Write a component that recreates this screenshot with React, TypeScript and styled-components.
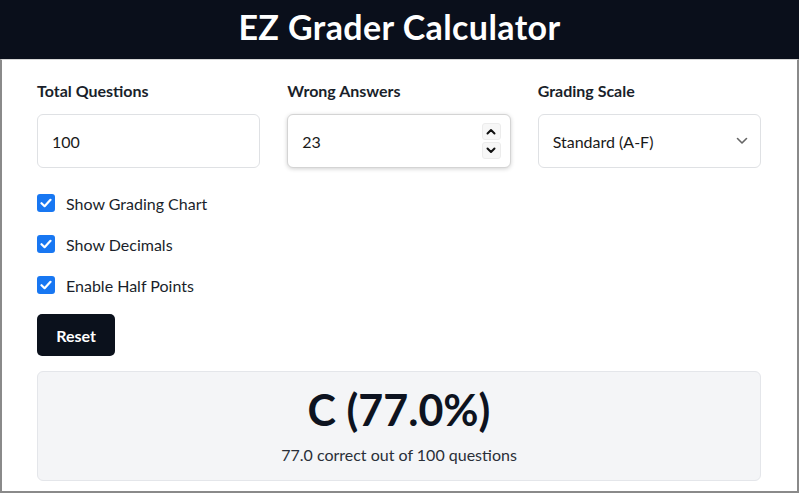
import styled, { createGlobalStyle } from "styled-components";

const GlobalStyle = createGlobalStyle`
  html, body {
    margin: 0;
    padding: 0;
    background: #ffffff;
    font-family: Lato, "Open Sans", Arial, sans-serif;
    color: #111827;
  }
  * { box-sizing: border-box; }
`;

const Page = styled.div`
  width: 799px;
  height: 493px;
  display: flex;
  flex-direction: column;
  overflow: hidden;
`;

const Header = styled.header`
  height: 59px;
  background: #0a0f1b;
  display: flex;
  align-items: center;
  justify-content: center;
  flex-shrink: 0;
  padding-bottom: 7px;
`;

const Title = styled.h1`
  margin: 0;
  color: #ffffff;
  font-size: 34px;
  font-weight: 700;
  letter-spacing: 0.4px;
`;

const Body = styled.main`
  flex: 1;
  border: 2px solid #8a8a8a;
  border-top: 1px solid #d7d7d7;
  padding: 21px 36px 0 35px;
  display: flex;
  flex-direction: column;
`;

const Fields = styled.div`
  display: grid;
  grid-template-columns: repeat(3, 1fr);
  column-gap: 27px;
`;

const Field = styled.div`
  display: flex;
  flex-direction: column;
  gap: 13px;
`;

const Label = styled.label`
  font-size: 16px;
  font-weight: 700;
  color: #1a1f2b;
  line-height: 20px;
`;

const InputBox = styled.div<{ $focused?: boolean }>`
  height: 54px;
  border: 1px solid ${(p) => (p.$focused ? "#d4d4d4" : "#dfe1e4")};
  border-radius: 6px;
  background: #fff;
  display: flex;
  align-items: center;
  padding: 0 9px 0 14px;
  font-size: 16px;
  color: #1a1a1a;
  box-shadow: ${(p) => (p.$focused ? "0 1px 4px rgba(0,0,0,0.18)" : "none")};
`;

const Value = styled.span`
  flex: 1;
`;

const Spinner = styled.div`
  display: flex;
  flex-direction: column;
  gap: 2px;
`;

const SpinBtn = styled.div`
  width: 19px;
  height: 17px;
  border-radius: 3px;
  background: #f7f7f7;
  border: 1px solid #ececec;
  display: flex;
  align-items: center;
  justify-content: center;
`;

const Chevron = styled.svg`
  flex-shrink: 0;
  margin-right: 3px;
`;

const Checks = styled.div`
  margin-top: 26px;
  display: flex;
  flex-direction: column;
  gap: 23px;
`;

const CheckRow = styled.label`
  display: flex;
  align-items: center;
  gap: 11px;
  font-size: 16px;
  color: #1a1f2b;
  height: 18px;
`;

const Box = styled.span`
  width: 18px;
  height: 18px;
  border-radius: 3px;
  background: #1877f2;
  display: flex;
  align-items: center;
  justify-content: center;
`;

const ResetButton = styled.button`
  margin-top: 20px;
  align-self: flex-start;
  width: 78px;
  height: 42px;
  border: none;
  border-radius: 5px;
  background: #0b111c;
  color: #fff;
  font-family: inherit;
  font-size: 16px;
  font-weight: 700;
`;

const Result = styled.section`
  margin-top: 15px;
  height: 110px;
  background: #f4f5f7;
  border: 1px solid #e4e6ea;
  border-radius: 6px;
  display: flex;
  flex-direction: column;
  align-items: center;
  padding-top: 13px;
`;

const Grade = styled.div`
  font-size: 43px;
  font-weight: 700;
  color: #0d1320;
  line-height: 50px;
`;

const Detail = styled.div`
  margin-top: 10px;
  font-size: 16px;
  color: #2a2f38;
`;

const Check = () => (
  <svg width="12" height="10" viewBox="0 0 12 10">
    <path d="M1.5 5.2 L4.6 8.2 L10.5 1.8" fill="none" stroke="#fff" strokeWidth="2.2" strokeLinecap="round" strokeLinejoin="round" />
  </svg>
);

const options = ["Show Grading Chart", "Show Decimals", "Enable Half Points"];

export default function App() {
  return (
    <>
      <GlobalStyle />
      <Page>
        <Header>
          <Title>EZ Grader Calculator</Title>
        </Header>
        <Body>
          <Fields>
            <Field>
              <Label>Total Questions</Label>
              <InputBox>
                <Value>100</Value>
              </InputBox>
            </Field>
            <Field>
              <Label>Wrong Answers</Label>
              <InputBox $focused>
                <Value>23</Value>
                <Spinner>
                  <SpinBtn>
                    <svg width="10" height="7" viewBox="0 0 10 7">
                      <path d="M1.5 5.5 L5 2 L8.5 5.5" fill="none" stroke="#111" strokeWidth="2" strokeLinecap="round" strokeLinejoin="round" />
                    </svg>
                  </SpinBtn>
                  <SpinBtn>
                    <svg width="10" height="7" viewBox="0 0 10 7">
                      <path d="M1.5 1.5 L5 5 L8.5 1.5" fill="none" stroke="#111" strokeWidth="2" strokeLinecap="round" strokeLinejoin="round" />
                    </svg>
                  </SpinBtn>
                </Spinner>
              </InputBox>
            </Field>
            <Field>
              <Label>Grading Scale</Label>
              <InputBox>
                <Value>Standard (A-F)</Value>
                <Chevron width="12" height="8" viewBox="0 0 12 8">
                  <path d="M1.5 1.5 L6 6 L10.5 1.5" fill="none" stroke="#666" strokeWidth="1.6" strokeLinecap="round" strokeLinejoin="round" />
                </Chevron>
              </InputBox>
            </Field>
          </Fields>
          <Checks>
            {options.map((o) => (
              <CheckRow key={o}>
                <Box>
                  <Check />
                </Box>
                {o}
              </CheckRow>
            ))}
          </Checks>
          <ResetButton>Reset</ResetButton>
          <Result>
            <Grade>C (77.0%)</Grade>
            <Detail>77.0 correct out of 100 questions</Detail>
          </Result>
        </Body>
      </Page>
    </>
  );
}
